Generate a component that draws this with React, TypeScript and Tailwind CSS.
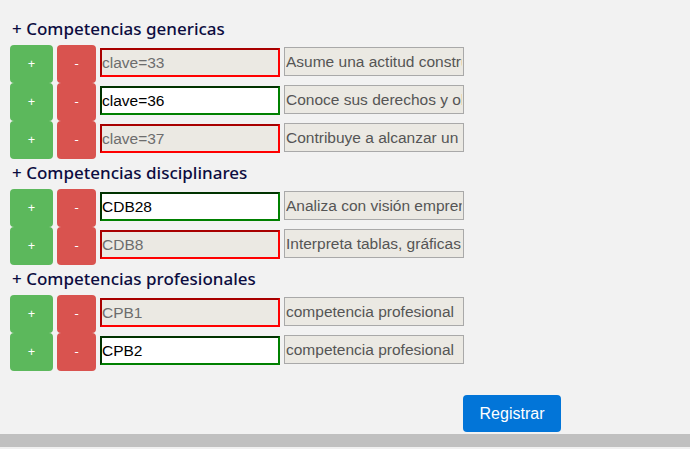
type Row = { clave: string; nombre: string; ok: boolean };

const sections: { title: string; rows: Row[] }[] = [
  {
    title: "Competencias genericas",
    rows: [
      { clave: "clave=33", nombre: "Asume una actitud constructiva", ok: false },
      { clave: "clave=36", nombre: "Conoce sus derechos y obligaciones", ok: true },
      { clave: "clave=37", nombre: "Contribuye a alcanzar un equilibrio", ok: false },
    ],
  },
  {
    title: "Competencias disciplinares",
    rows: [
      { clave: "CDB28", nombre: "Analiza con visión emprendedora", ok: true },
      { clave: "CDB8", nombre: "Interpreta tablas, gráficas, mapas", ok: false },
    ],
  },
  {
    title: "Competencias profesionales",
    rows: [
      { clave: "CPB1", nombre: "competencia profesional", ok: false },
      { clave: "CPB2", nombre: "competencia profesional", ok: true },
    ],
  },
];

const CompRow = ({ clave, nombre, ok }: Row) => {
  return (
    <div className="flex gap-[4px] h-[38px]">
      <button className="w-[43px] h-[38px] rounded-[4px] bg-[#5cb85c] text-white text-[13px]">
        +
      </button>
      <button className="w-[39px] h-[38px] rounded-[4px] bg-[#d9534f] text-white text-[13px]">
        -
      </button>
      <input
        readOnly
        value={clave}
        className={
          ok
            ? "mt-[3px] h-[29px] w-[180px] px-0 border-2 border-t-[#003300] border-l-[#003300] border-b-[#008000] border-r-[#008000] bg-white text-black text-[15.5px] outline-none"
            : "mt-[3px] h-[29px] w-[180px] px-0 border-2 border-t-[#a80000] border-l-[#a80000] border-b-[#ff0000] border-r-[#ff0000] bg-[#ebe9e3] text-[#6d6d6d] text-[15.5px] outline-none"
        }
        style={{ fontFamily: '"Liberation Sans", Arial, sans-serif' }}
      />
      <input
        readOnly
        value={nombre}
        className="mt-[2px] h-[29px] w-[180px] px-[1px] border border-[#a9a9a9] bg-[#ebe9e3] text-[#555555] text-[15.5px] outline-none"
        style={{ fontFamily: '"Liberation Sans", Arial, sans-serif' }}
      />
    </div>
  );
};

export default function App() {
  return (
    <div className="w-[690px] h-[449px] bg-[#f2f2f2] flex flex-col overflow-hidden">
      <div className="pt-[15px] px-[10px] flex-1">
        {sections.map((s) => (
          <div key={s.title}>
            <div
              className="h-[30px] flex items-center pb-[3px] pl-[2px] text-[17px] font-medium text-[#0c0c40]"
              style={{ fontFamily: '"Noto Sans", sans-serif' }}
            >
              + {s.title}
            </div>
            {s.rows.map((r) => (
              <CompRow key={r.clave} {...r} />
            ))}
          </div>
        ))}
        <div className="mt-[24px] pl-[453px]">
          <button
            className="w-[98px] h-[37px] rounded-[4px] bg-[#0275d8] text-white text-[16px]"
            style={{ fontFamily: '"Liberation Sans", Arial, sans-serif' }}
          >
            Registrar
          </button>
        </div>
      </div>
      <div className="h-[13px] bg-[#c0c0c0]" />
      <div className="h-[2px] bg-[#f0f0f0]" />
    </div>
  );
}
